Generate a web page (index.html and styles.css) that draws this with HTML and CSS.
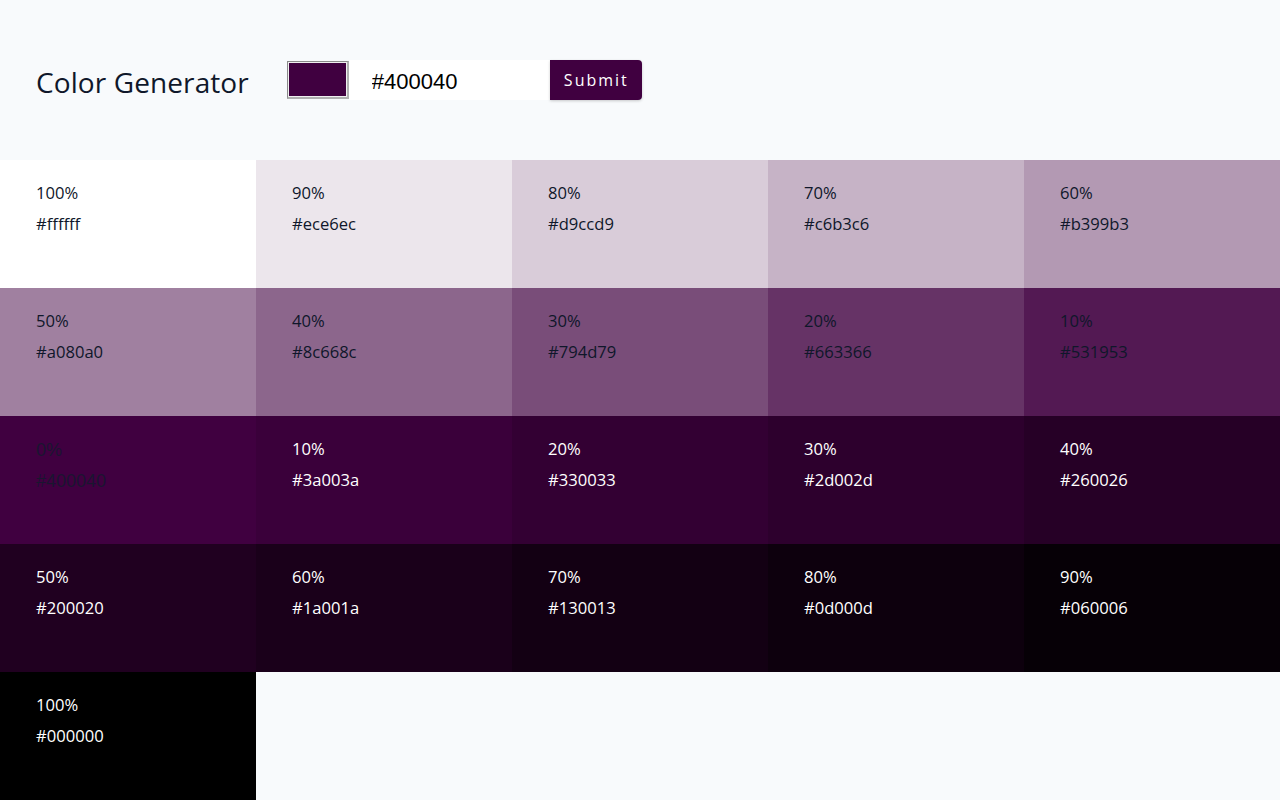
FILE: index.html
```html
<!DOCTYPE html>
<html lang="en">
<head>
<meta charset="utf-8">
<title>Color Generator</title>
<link rel="stylesheet" href="styles.css">
</head>
<body>
<section class="container">
  <h3 class="title">Color Generator</h3>
  <form class="form">
    <span class="swatch"><span class="swatch-fill"></span></span>
    <input class="hex-input" type="text" value="#400040">
    <button class="btn" type="button">Submit</button>
  </form>
</section>
<section class="colors">
  <article class="color" style="background:#ffffff"><p class="percent">100%</p><p class="hex">#ffffff</p></article>
  <article class="color" style="background:#ece6ec"><p class="percent">90%</p><p class="hex">#ece6ec</p></article>
  <article class="color" style="background:#d9ccd9"><p class="percent">80%</p><p class="hex">#d9ccd9</p></article>
  <article class="color" style="background:#c6b3c6"><p class="percent">70%</p><p class="hex">#c6b3c6</p></article>
  <article class="color" style="background:#b399b3"><p class="percent">60%</p><p class="hex">#b399b3</p></article>
  <article class="color" style="background:#a080a0"><p class="percent">50%</p><p class="hex">#a080a0</p></article>
  <article class="color" style="background:#8c668c"><p class="percent">40%</p><p class="hex">#8c668c</p></article>
  <article class="color" style="background:#794d79"><p class="percent">30%</p><p class="hex">#794d79</p></article>
  <article class="color" style="background:#663366"><p class="percent">20%</p><p class="hex">#663366</p></article>
  <article class="color" style="background:#531953"><p class="percent">10%</p><p class="hex">#531953</p></article>
  <article class="color base" style="background:#400040"><p class="percent">0%</p><p class="hex">#400040</p></article>
  <article class="color light" style="background:#3a003a"><p class="percent">10%</p><p class="hex">#3a003a</p></article>
  <article class="color light" style="background:#330033"><p class="percent">20%</p><p class="hex">#330033</p></article>
  <article class="color light" style="background:#2d002d"><p class="percent">30%</p><p class="hex">#2d002d</p></article>
  <article class="color light" style="background:#260026"><p class="percent">40%</p><p class="hex">#260026</p></article>
  <article class="color light" style="background:#200020"><p class="percent">50%</p><p class="hex">#200020</p></article>
  <article class="color light" style="background:#1a001a"><p class="percent">60%</p><p class="hex">#1a001a</p></article>
  <article class="color light" style="background:#130013"><p class="percent">70%</p><p class="hex">#130013</p></article>
  <article class="color light" style="background:#0d000d"><p class="percent">80%</p><p class="hex">#0d000d</p></article>
  <article class="color light" style="background:#060006"><p class="percent">90%</p><p class="hex">#060006</p></article>
  <article class="color light" style="background:#000000"><p class="percent">100%</p><p class="hex">#000000</p></article>
</section>
</body>
</html>
```
FILE: styles.css
```css
* { box-sizing: border-box; }
html, body { margin: 0; padding: 0; }
body {
  background: #f8fafc;
  font-family: "Open Sans", "Noto Sans", sans-serif;
  color: #102a42;
}
.container {
  height: 160px;
  display: flex;
  align-items: center;
  padding: 0 36px;
}
.title {
  margin: 4px 38px 0 0;
  font-size: 28px;
  font-weight: 400;
  letter-spacing: 0.1px;
  color: #0f172a;
  line-height: 1;
}
.form {
  display: flex;
  align-items: center;
  margin: 0;
}
.swatch {
  display: block;
  width: 62px;
  height: 38px;
  border-top: 1px solid #8a8a8a;
  border-left: 1px solid #8a8a8a;
  border-right: 2px solid #b0b0b0;
  border-bottom: 2px solid #b0b0b0;
  background: #f0f0f0;
  padding: 1px;
}
.swatch-fill {
  display: block;
  width: 100%;
  height: 100%;
  background: #400040;
}
.hex-input {
  width: 201px;
  height: 40px;
  border: 0;
  outline: none;
  background: #fff;
  padding: 3px 22px 0 23px;
  font-family: "Liberation Sans", Arial, sans-serif;
  font-size: 22px;
  color: #000;
}
.btn {
  height: 40px;
  border: 0;
  background: #400040;
  color: #fff;
  font-family: "Open Sans", sans-serif;
  font-size: 16px;
  letter-spacing: 2px;
  padding: 0 13px 0 14px;
  border-radius: 0 4px 4px 0;
  box-shadow: 0 1px 3px rgba(0,0,0,0.2);
}
.colors {
  display: grid;
  grid-template-columns: repeat(5, 1fr);
  grid-auto-rows: 128px;
}
.color {
  padding: 17px 36px;
  font-size: 16.6px;
  color: #0f172a;
}
.color p { margin: 0; line-height: 31px; }
.color.light { color: #fff; }
.color.base {
  padding-top: 19px;
  font-family: "Liberation Sans", Arial, sans-serif;
  font-size: 18px;
  color: #1a1530;
}
```
